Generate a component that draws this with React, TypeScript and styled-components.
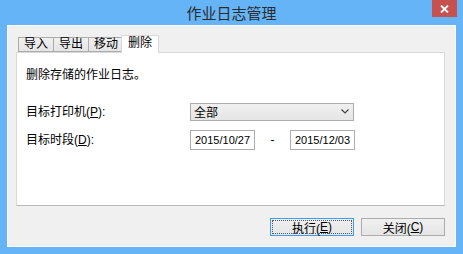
import React from 'react'
import styled, { createGlobalStyle } from 'styled-components'

const GlobalStyle = createGlobalStyle`
    html, body {
        margin: 0;
        padding: 0;
        background: #66b4f8;
    }
    * {
        box-sizing: border-box;
    }
`;

const font = `"Liberation Sans", "Noto Sans CJK SC", sans-serif`;

const Window = styled.div`
    display: flex;
    flex-direction: column;
    width: 463px;
    height: 254px;
    padding: 0 7px 7px;
    background: #66b4f8;
    font-family: ${font};
    font-size: 12px;
    color: #000;
`;

const TitleBar = styled.div`
    position: relative;
    display: flex;
    align-items: center;
    justify-content: center;
    height: 25px;
    margin: 0 -7px;
    font-size: 15px;
    color: #2b2b2b;
`;

const CloseButton = styled.div`
    position: absolute;
    top: 0;
    right: 6px;
    display: flex;
    align-items: center;
    justify-content: center;
    width: 25px;
    height: 17px;
    background: #c7514f;
`;

const Client = styled.div`
    flex: 1;
    display: flex;
    flex-direction: column;
    padding: 9px 10px 10px 8px;
    background: #f0f0f0;
    border: 1px solid #fbfbfb;
`;

const TabRow = styled.div`
    display: flex;
    align-items: flex-end;
    height: 17px;
    padding-left: 2px;
    position: relative;
    z-index: 1;
`;

const Tab = styled.div<{ $active?: boolean }>`
    display: flex;
    align-items: flex-end;
    justify-content: center;
    height: ${p => p.$active ? '18px' : '15px'};
    margin: ${p => p.$active ? '0 -2px -1px' : '0 -1px 0 0'};
    padding: ${p => p.$active ? '0 6px 3px' : '0 5px 0'};
    line-height: 13px;
    border: 1px solid ${p => p.$active ? '#d9d9d9' : '#acacac'};
    border-bottom: ${p => p.$active ? 'none' : '1px solid #acacac'};
    background: ${p => p.$active ? '#fff' : 'linear-gradient(#f0f0f0, #e5e5e5)'};
    position: relative;
    z-index: ${p => p.$active ? 2 : 1};
    &:last-child {
        margin-right: 0;
    }
`;

const Panel = styled.div`
    display: flex;
    flex-direction: column;
    height: 154px;
    padding: 15px 9px 0;
    background: #fff;
    border: 1px solid #d9d9d9;
    border-bottom-color: #b8b8b8;
`;

const Intro = styled.div`
    height: 14px;
    line-height: 14px;
`;

const Form = styled.div`
    display: grid;
    grid-template-columns: 164px auto;
    grid-template-rows: 17px 20px;
    row-gap: 10px;
    margin-top: 21px;
    align-items: center;
`;

const Label = styled.div`
    line-height: 14px;
`;

const Key = styled.span`
    text-decoration: underline;
`;

const Select = styled.div`
    display: flex;
    align-items: center;
    justify-content: space-between;
    width: 164px;
    height: 18px;
    padding: 0 4px 0 3px;
    border: 1px solid #acacac;
    background: linear-gradient(#f0f0f0, #e5e5e5);
`;

const DateRow = styled.div`
    display: flex;
    align-items: center;
`;

const DateBox = styled.input`
    width: 65px;
    height: 20px;
    padding: 0 3px 0 4px;
    border: 1px solid #abadb3;
    background: #fff;
    font-family: ${font};
    font-size: 11px;
    color: #000;
    outline: none;
`;

const Dash = styled.div`
    width: 35px;
    text-align: center;
`;

const Footer = styled.div`
    display: flex;
    justify-content: flex-end;
    gap: 7px;
    margin-top: 12px;
    padding-right: 0;
`;

const Button = styled.div<{ $focused?: boolean }>`
    position: relative;
    display: flex;
    align-items: center;
    justify-content: center;
    width: 84px;
    height: 18px;
    border: 1px solid ${p => p.$focused ? '#3c9cf0' : '#acacac'};
    background: linear-gradient(#f0f0f0, #e5e5e5);
    &::after {
        content: '';
        display: ${p => p.$focused ? 'block' : 'none'};
        position: absolute;
        inset: 1px;
        border: 1px dotted #555;
    }
`;

const App = () => {
    return (
        <>
            <GlobalStyle />
            <Window>
                <TitleBar>
                    作业日志管理
                    <CloseButton>
                        <svg width="9" height="8" viewBox="0 0 9 8">
                            <path d="M1 0.5 L8 7.5 M8 0.5 L1 7.5" stroke="#fff" strokeWidth="1.8" />
                        </svg>
                    </CloseButton>
                </TitleBar>
                <Client>
                    <TabRow>
                        <Tab>导入</Tab>
                        <Tab>导出</Tab>
                        <Tab>移动</Tab>
                        <Tab $active>删除</Tab>
                    </TabRow>
                    <Panel>
                        <Intro>删除存储的作业日志。</Intro>
                        <Form>
                            <Label>目标打印机(<Key>P</Key>):</Label>
                            <Select>
                                <span>全部</span>
                                <svg width="8" height="5" viewBox="0 0 8 5">
                                    <path d="M0.5 0.5 L4 4 L7.5 0.5" stroke="#444" strokeWidth="1.2" fill="none" />
                                </svg>
                            </Select>
                            <Label>目标时段(<Key>D</Key>):</Label>
                            <DateRow>
                                <DateBox readOnly defaultValue="2015/10/27" />
                                <Dash>-</Dash>
                                <DateBox readOnly defaultValue="2015/12/03" />
                            </DateRow>
                        </Form>
                    </Panel>
                    <Footer>
                        <Button $focused>执行(<Key>E</Key>)</Button>
                        <Button>关闭(<Key>C</Key>)</Button>
                    </Footer>
                </Client>
            </Window>
        </>
    )
}

export default App
